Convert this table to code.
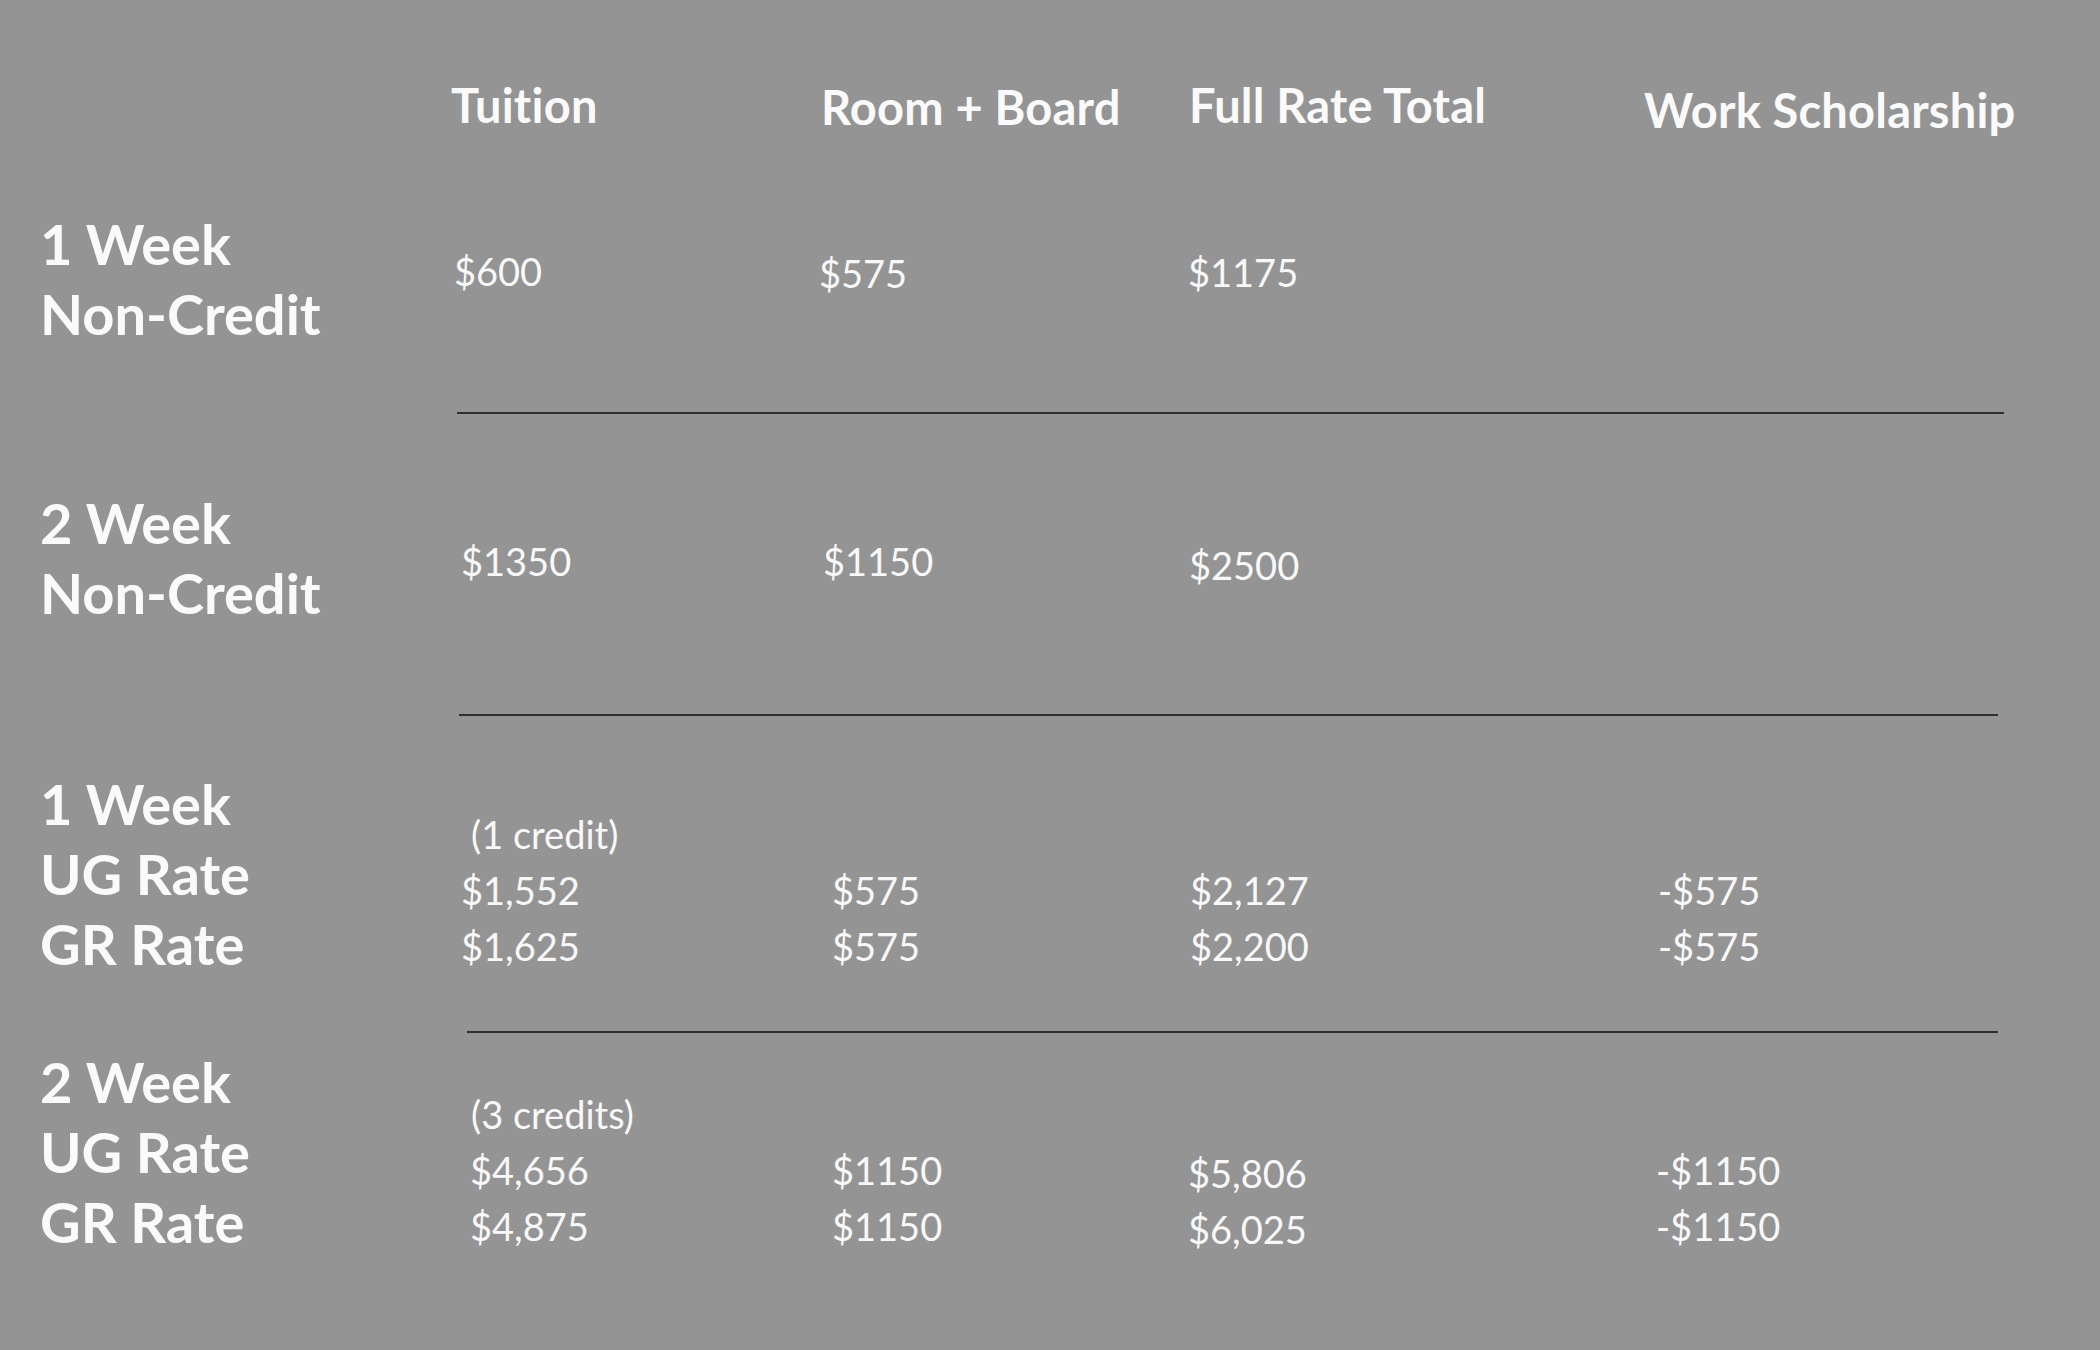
import React from "react";

const cols = "grid grid-cols-[411px_368px_369px_456px_1fr]";
const head = "font-bold text-[47px] leading-[46px] text-[#fafafa] whitespace-nowrap tracking-[0.2px]";
const label = "font-bold text-[56px] leading-[70px] text-[#fafafa] whitespace-nowrap";
const val = "font-normal text-[38px] leading-[56px] text-[#f8f8f8] whitespace-nowrap";

export default function App() {
  return (
    <div className="w-[2100px] h-[1350px] overflow-hidden bg-[#949494] pl-[40px] pt-[82px] font-['Lato','Liberation_Sans',sans-serif]">
      {/* Header */}
      <div className={`${cols} h-[46px]`}>
        <div />
        <div className={head}>Tuition</div>
        <div className={`${head} ml-[2px] mt-[2px]`}>Room + Board</div>
        <div className={`${head} ml-[1px]`}>Full Rate Total</div>
        <div className={`${head} mt-[5px]`}>Work Scholarship</div>
      </div>

      {/* Section 1 */}
      <div className={`${cols} h-[284px]`}>
        <div className={`${label} pt-[81px]`}>
          <div>1 Week</div>
          <div>Non-Credit</div>
        </div>
        <div className={`${val} pt-[115px] ml-[3px]`}>$600</div>
        <div className={`${val} pt-[117px]`}>$575</div>
        <div className={`${val} pt-[116px]`}>$1175</div>
        <div />
      </div>
      <div className={cols}>
        <div />
        <div className="col-span-4 h-[2px] bg-[#2e2e2e] ml-[6px] w-[1547px]" />
      </div>

      {/* Section 2 */}
      <div className={`${cols} h-[300px]`}>
        <div className={`${label} pt-[74px]`}>
          <div>2 Week</div>
          <div>Non-Credit</div>
        </div>
        <div className={`${val} pt-[119px] ml-[10px]`}>$1350</div>
        <div className={`${val} pt-[119px] ml-[4px]`}>$1150</div>
        <div className={`${val} pt-[123px] ml-[1px]`}>$2500</div>
        <div />
      </div>
      <div className={cols}>
        <div />
        <div className="col-span-4 h-[2px] bg-[#2e2e2e] ml-[8px] w-[1539px]" />
      </div>

      {/* Section 3 */}
      <div className={`${cols} h-[315px]`}>
        <div className={`${label} pt-[53px]`}>
          <div>1 Week</div>
          <div>UG Rate</div>
          <div>GR Rate</div>
        </div>
        <div className={`${val} pt-[90px] ml-[10px]`}>
          <div className="ml-[10px]">(1 credit)</div>
          <div>$1,552</div>
          <div>$1,625</div>
        </div>
        <div className={`${val} pt-[146px] ml-[13px]`}>
          <div>$575</div>
          <div>$575</div>
        </div>
        <div className={`${val} pt-[146px] ml-[2px]`}>
          <div>$2,127</div>
          <div>$2,200</div>
        </div>
        <div className={`${val} pt-[146px] ml-[14px]`}>
          <div>-$575</div>
          <div>-$575</div>
        </div>
      </div>
      <div className={cols}>
        <div />
        <div className="col-span-4 h-[2px] bg-[#2e2e2e] ml-[16px] w-[1531px]" />
      </div>

      {/* Section 4 */}
      <div className={`${cols} h-[317px]`}>
        <div className={`${label} pt-[14px]`}>
          <div>2 Week</div>
          <div>UG Rate</div>
          <div>GR Rate</div>
        </div>
        <div className={`${val} pt-[53px] ml-[19px]`}>
          <div className="ml-[1px]">(3 credits)</div>
          <div>$4,656</div>
          <div>$4,875</div>
        </div>
        <div className={`${val} pt-[109px] ml-[13px]`}>
          <div>$1150</div>
          <div>$1150</div>
        </div>
        <div className={`${val} pt-[112px]`}>
          <div>$5,806</div>
          <div>$6,025</div>
        </div>
        <div className={`${val} pt-[109px] ml-[12px]`}>
          <div>-$1150</div>
          <div>-$1150</div>
        </div>
      </div>
    </div>
  );
}
